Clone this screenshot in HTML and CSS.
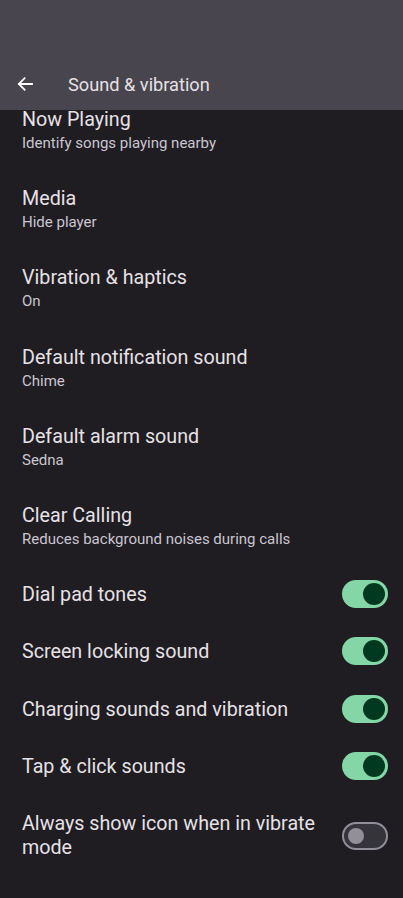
FILE: index.html
```html
<!DOCTYPE html>
<html lang="en">
<head>
    <meta charset="UTF-8">
    <meta name="viewport" content="width=device-width, initial-scale=1.0">
    <title>Sound &amp; vibration</title>
    <link rel="stylesheet" href="styles.css">
</head>
<body>
    <div class="app-bar">
        <div class="status-bar"></div>
        <div class="toolbar">
            <button class="back" aria-label="Back">
                <svg width="16" height="16" viewBox="0 0 16 16">
                    <path d="M15 8H1.8M7.6 2.2L1.8 8l5.8 5.8" fill="none" stroke="#ffffff" stroke-width="1.8" stroke-linecap="square"/>
                </svg>
            </button>
            <h1>Sound &amp; vibration</h1>
        </div>
    </div>

    <div class="list">
        <div class="item first">
            <div class="title">Now Playing</div>
            <div class="summary">Identify songs playing nearby</div>
        </div>
        <div class="item">
            <div class="title">Media</div>
            <div class="summary">Hide player</div>
        </div>
        <div class="item">
            <div class="title">Vibration &amp; haptics</div>
            <div class="summary">On</div>
        </div>
        <div class="item">
            <div class="title">Default notification sound</div>
            <div class="summary">Chime</div>
        </div>
        <div class="item">
            <div class="title">Default alarm sound</div>
            <div class="summary">Sedna</div>
        </div>
        <div class="item">
            <div class="title">Clear Calling</div>
            <div class="summary">Reduces background noises during calls</div>
        </div>

        <div class="item switch-item">
            <div class="title">Dial pad tones</div>
            <span class="switch on"><span class="thumb"></span></span>
        </div>
        <div class="item switch-item">
            <div class="title">Screen locking sound</div>
            <span class="switch on"><span class="thumb"></span></span>
        </div>
        <div class="item switch-item">
            <div class="title">Charging sounds and vibration</div>
            <span class="switch on"><span class="thumb"></span></span>
        </div>
        <div class="item switch-item">
            <div class="title">Tap &amp; click sounds</div>
            <span class="switch on"><span class="thumb"></span></span>
        </div>
        <div class="item switch-item multi">
            <div class="title">Always show icon when in vibrate mode</div>
            <span class="switch"><span class="thumb"></span></span>
        </div>
    </div>
</body>
</html>
```

FILE: styles.css
```css
body {
    margin: 0;
    background-color: #1f1d22;
    font-family: Roboto, "Noto Sans", sans-serif;
    color: #e6e1e6;
}
.app-bar {
    background-color: #49454f;
    height: 110px;
}
.status-bar {
    height: 60px;
}
.toolbar {
    height: 50px;
    display: flex;
    align-items: center;
    padding-bottom: 2px;
    box-sizing: border-box;
}
.back {
    background: none;
    border: none;
    padding: 0;
    margin-left: 17px;
    width: 16px;
    height: 16px;
    display: flex;
}
.toolbar h1 {
    margin: 0 0 0 35px;
    font-size: 18.2px;
    font-weight: 400;
    color: #e6e1e6;
}
.item {
    padding: 20.6px 15px 16.6px 22px;
}
.item.first {
    padding-top: 1px;
}
.title {
    font-size: 19.7px;
    line-height: 18px;
    color: #e6e1e6;
}
.summary {
    margin-top: 4px;
    font-size: 15px;
    line-height: 20px;
    color: #cac5d0;
}
.switch-item {
    display: flex;
    align-items: center;
    justify-content: space-between;
    padding-top: 14.65px;
    padding-bottom: 14.65px;
}
.switch-item .title {
    line-height: 26px;
    padding-top: 2px;
}
.switch-item.multi {
    padding-top: 17.2px;
}
.switch-item.multi .title {
    line-height: 24px;
    padding-top: 0;
    padding-right: 4px;
}
.switch {
    flex: none;
    width: 46px;
    height: 28px;
    border-radius: 14px;
    box-sizing: border-box;
    border: 2px solid #938f99;
    background-color: #36343b;
    display: flex;
    align-items: center;
    padding-left: 4px;
}
.switch .thumb {
    width: 16px;
    height: 16px;
    border-radius: 50%;
    background-color: #938f99;
}
.switch.on {
    border-color: #84d6a6;
    background-color: #84d6a6;
    justify-content: flex-end;
    padding: 0 1px 0 0;
}
.switch.on .thumb {
    width: 22px;
    height: 22px;
    background-color: #00391f;
}
```
